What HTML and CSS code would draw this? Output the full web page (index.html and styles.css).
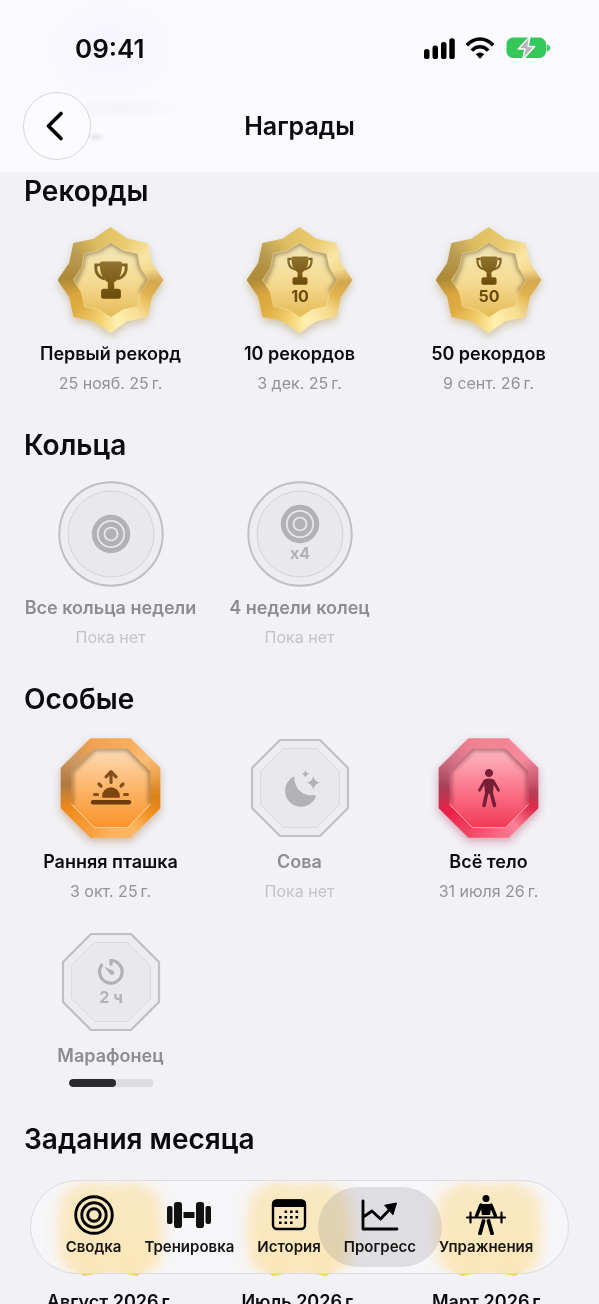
FILE: index.html
```html
<!DOCTYPE html>
<html lang="ru">
<head>
<meta charset="UTF-8">
<meta name="viewport" content="width=device-width, initial-scale=1.0">
<title>Награды</title>
<link rel="stylesheet" href="styles.css">
</head>
<body>
<svg class="sprite" aria-hidden="true">
  <defs>
    <linearGradient id="goldFace" x1="0" y1="0" x2="0" y2="1">
      <stop offset="0" stop-color="#f2e6bc"/>
      <stop offset="0.5" stop-color="#f5dc94"/>
      <stop offset="1" stop-color="#e5ba55"/>
    </linearGradient>
    <linearGradient id="orangeFace" x1="0" y1="0" x2="0" y2="1">
      <stop offset="0" stop-color="#fcdcb8"/>
      <stop offset="0.5" stop-color="#fdb569"/>
      <stop offset="1" stop-color="#fa932a"/>
    </linearGradient>
    <linearGradient id="redFace" x1="0" y1="0" x2="0" y2="1">
      <stop offset="0" stop-color="#fdb9c1"/>
      <stop offset="0.5" stop-color="#fb788d"/>
      <stop offset="1" stop-color="#f23a57"/>
    </linearGradient>
    <linearGradient id="goldInk" x1="0" y1="0" x2="0" y2="1">
      <stop offset="0" stop-color="#8f742c"/>
      <stop offset="1" stop-color="#6b4c08"/>
    </linearGradient>
    <filter id="soft" x="-20%" y="-20%" width="140%" height="140%">
      <feGaussianBlur stdDeviation="2.2"/>
    </filter>
    <path id="starShape" d="M0-37.5 12.2-29.6 26.5-26.5 29.6-12.2 37.5 0 29.6 12.2 26.5 26.5 12.2 29.6 0 37.5-12.2 29.6-26.5 26.5-29.6 12.2-37.5 0-29.6-12.2-26.5-26.5-12.2-29.6Z"/>
    <path id="octShape" d="M-16.5-39.5H16.5L39.5-16.5V16.5L16.5 39.5H-16.5L-39.5 16.5V-16.5Z"/>
    <clipPath id="starClip"><use href="#starShape"/></clipPath>
    <clipPath id="octClip"><use href="#octShape"/></clipPath>
  </defs>
  <symbol id="starFace" viewBox="-53 -53 106 106">
    <use href="#starShape" fill="url(#goldFace)"/>
    <g clip-path="url(#starClip)">
      <path d="M-37 5-29.6-12.2-26.5-26.5-12.2-29.6 0-37.5 12.2-29.6 26.5-26.5 29.6-12.2 37.5 0 30 13" fill="none" stroke="#5f4a1a" stroke-opacity=".6" stroke-width="4" filter="url(#soft)"/>
    </g>
    <use href="#starShape" fill="none" stroke="#fff0b8" stroke-opacity=".35"/>
  </symbol>
  <symbol id="orangeOct" viewBox="-53 -53 106 106">
    <use href="#octShape" fill="url(#orangeFace)"/>
    <g clip-path="url(#octClip)">
      <path d="M-39.5 16.5V-16.5L-16.5-39.5H16.5L39.5-16.5V16.5" fill="none" stroke="#6e4a22" stroke-opacity=".65" stroke-width="4" filter="url(#soft)"/>
    </g>
    <path d="M39.5 16.5 16.5 39.5H-16.5L-39.5 16.5" fill="none" stroke="#ffd39a"/>
  </symbol>
  <symbol id="redOct" viewBox="-53 -53 106 106">
    <use href="#octShape" fill="url(#redFace)"/>
    <g clip-path="url(#octClip)">
      <path d="M-39.5 16.5V-16.5L-16.5-39.5H16.5L39.5-16.5V16.5" fill="none" stroke="#6e2233" stroke-opacity=".65" stroke-width="4" filter="url(#soft)"/>
    </g>
    <path d="M39.5 16.5 16.5 39.5H-16.5L-39.5 16.5" fill="none" stroke="#ffa3a3"/>
  </symbol>
  <symbol id="lockedCircle" viewBox="-53 -53 106 106">
    <circle r="51.7" fill="#ededf1" stroke="#bfbfc4" stroke-width="2"/>
    <circle r="43" fill="#e9e9ed" stroke="#d3d3d8"/>
  </symbol>
  <symbol id="lockedOct" viewBox="-53 -53 106 106">
    <path d="M-20-48H20L48-20V20L20 48H-20L-48 20V-20Z" fill="#ededf1" stroke="#bfbfc4" stroke-width="2.2" stroke-linejoin="round"/>
    <path d="M-16.5-39.5H16.5L39.5-16.5V16.5L16.5 39.5H-16.5L-39.5 16.5V-16.5Z" fill="#e9e9ed" stroke="#d9d9de"/>
  </symbol>
  <symbol id="trophy" viewBox="-18 -19 36 38">
    <path d="M-11-15.2H-15.2C-15.8-7-12-2.5-6.5-1.2M11-15.2H15.2C15.8-7 12-2.5 6.5-1.2" fill="none" stroke="#7f6320" stroke-width="2.8"/>
    <path d="M-9.3-18.5H9.3Q11.3-18.5 11.2-16C11-8 9.5-1.5 3.2 2.2V8.7H7.2Q9.9 8.7 9.9 11.5V16.5Q9.9 18.7 7.7 18.7H-7.7Q-9.9 18.7-9.9 16.5V11.5Q-9.9 8.7-7.2 8.7H-3.2V2.2C-9.5-1.5-11-8-11.2-16Q-11.3-18.5-9.3-18.5Z" fill="url(#goldInk)"/>
  </symbol>
  <symbol id="target" viewBox="-20 -20 40 40">
    <circle r="19.2" fill="#b1b1b6"/>
    <circle r="13.2" fill="none" stroke="#e9e9ed" stroke-width="1.7"/>
    <circle r="6.5" fill="none" stroke="#e9e9ed" stroke-width="1.7"/>
  </symbol>
</svg>

<div class="screen">
  <header class="topbar">
    <div class="status">
      <span class="clock">09:41</span>
      <svg class="status-icons" viewBox="0 0 128 24" aria-hidden="true">
        <rect x="1" y="13" width="5.5" height="10" rx="2.6"/>
        <rect x="9.5" y="9.5" width="5.5" height="13.5" rx="2.6"/>
        <rect x="18" y="6" width="5.5" height="17" rx="2.6"/>
        <rect x="26.3" y="2.2" width="5.5" height="20.8" rx="2.6"/>
        <g fill="none" stroke="#000" stroke-width="3.5">
          <path d="M43.8 9.2C51.5 .8 62.5 .8 70.2 9.2"/>
          <path d="M48.8 14.6C53.5 9.6 60.5 9.6 65.2 14.6"/>
        </g>
        <path d="M52.8 18.2Q57 14.6 61.2 18.2L57 22.7Z"/>
        <path d="M123.5 8.5Q127.5 9.2 127.5 12T123.5 15.5Z" fill="#48cf68"/>
        <rect x="83.5" y="1.5" width="39.5" height="20.5" rx="6.5" fill="#34c759"/>
        <path d="M107 .5 95.2 13H102L99.8 23.5 111.7 10.5H105Z" fill="#b3b3b9" stroke="#fafaff" stroke-width="1.5" stroke-linejoin="round"/>
      </svg>
    </div>
    <div class="navbar">
      <button class="back" type="button" aria-label="Назад">
        <svg viewBox="0 0 20 30" aria-hidden="true"><path d="M16 2.5 3.5 15 16 27.5" fill="none" stroke="#000" stroke-width="3.6" stroke-linecap="round" stroke-linejoin="round"/></svg>
      </button>
      <h1>Награды</h1>
    </div>
  </header>

  <main class="content">
    <section>
      <h2>Рекорды</h2>
      <ul class="awards">
        <li class="award">
          <div class="medal medal-star gold">
            <span class="rim"></span>
            <svg viewBox="-53 -53 106 106" aria-hidden="true">
              <use href="#starFace" x="-53" y="-53" width="106" height="106"/>
              <use href="#trophy" x="-18" y="-19" width="36" height="38"/>
            </svg>
          </div>
          <h3>Первый рекорд</h3>
          <p>25 нояб. 25&#8239;г.</p>
        </li>
        <li class="award">
          <div class="medal medal-star gold">
            <span class="rim"></span>
            <svg viewBox="-53 -53 106 106">
              <use href="#starFace" x="-53" y="-53" width="106" height="106"/>
              <use href="#trophy" x="-14" y="-24" width="28" height="29"/>
              <text class="medal-text" y="22">10</text>
            </svg>
          </div>
          <h3>10 рекордов</h3>
          <p>3 дек. 25&#8239;г.</p>
        </li>
        <li class="award">
          <div class="medal medal-star gold">
            <span class="rim"></span>
            <svg viewBox="-53 -53 106 106">
              <use href="#starFace" x="-53" y="-53" width="106" height="106"/>
              <use href="#trophy" x="-14" y="-24" width="28" height="29"/>
              <text class="medal-text" y="22">50</text>
            </svg>
          </div>
          <h3>50 рекордов</h3>
          <p>9 сент. 26&#8239;г.</p>
        </li>
      </ul>
    </section>

    <section>
      <h2>Кольца</h2>
      <ul class="awards">
        <li class="award locked">
          <div class="medal">
            <svg viewBox="-53 -53 106 106" aria-hidden="true">
              <use href="#lockedCircle" x="-53" y="-53" width="106" height="106"/>
              <use href="#target" x="-20" y="-20" width="40" height="40"/>
            </svg>
          </div>
          <h3>Все кольца недели</h3>
          <p>Пока нет</p>
        </li>
        <li class="award locked">
          <div class="medal">
            <svg viewBox="-53 -53 106 106">
              <use href="#lockedCircle" x="-53" y="-53" width="106" height="106"/>
              <use href="#target" x="-20" y="-30" width="40" height="40"/>
              <text class="medal-text" y="25">x4</text>
            </svg>
          </div>
          <h3>4 недели колец</h3>
          <p>Пока нет</p>
        </li>
      </ul>
    </section>

    <section>
      <h2>Особые</h2>
      <ul class="awards">
        <li class="award">
          <div class="medal medal-oct orange">
            <span class="rim"></span>
            <svg viewBox="-53 -53 106 106" aria-hidden="true">
              <use href="#orangeOct" x="-53" y="-53" width="106" height="106"/>
              <g fill="none" stroke="#84501a" stroke-width="3.2" stroke-linecap="round" stroke-linejoin="round">
                <path d="M0-5.5V-16M-5-11.2 0-16.3 5-11.2M-12-4-10-2M12-4 10-2M-16.5 6.5H-13.5M16.5 6.5H13.5"/>
                <path d="M-18 14.3H18" stroke="#6e3c06" stroke-width="4.4"/>
              </g>
              <path d="M-8.8 9.8V8A8.8 8.8 0 0 1 8.8 8V9.8Z" fill="#7d4510"/>
            </svg>
          </div>
          <h3>Ранняя пташка</h3>
          <p>3 окт. 25&#8239;г.</p>
        </li>
        <li class="award locked">
          <div class="medal">
            <svg viewBox="-53 -53 106 106" aria-hidden="true">
              <use href="#lockedOct" x="-53" y="-53" width="106" height="106"/>
              <g fill="#b1b1b6">
                <path d="M-5.5-11C-6.5-1.5 2 9.2 14 7C16 6.6 16 8.5 15.3 10A16 16 0 1 1-6.5-11.3Q-5.6-11.6-5.5-11Z"/>
                <path d="M5.5-18Q6.2-14.7 9.5-14 6.2-13.3 5.5-10 4.8-13.3 1.5-14 4.8-14.7 5.5-18Z"/>
                <path d="M13.3-12Q14.3-6.2 20-5.2 14.3-4.2 13.3 1.6 12.3-4.2 6.6-5.2 12.3-6.2 13.3-12Z"/>
              </g>
            </svg>
          </div>
          <h3>Сова</h3>
          <p>Пока нет</p>
        </li>
        <li class="award">
          <div class="medal medal-oct red">
            <span class="rim"></span>
            <svg viewBox="-53 -53 106 106" aria-hidden="true">
              <use href="#redOct" x="-53" y="-53" width="106" height="106"/>
              <g fill="#762036" stroke="#762036" stroke-linecap="round" stroke-linejoin="round">
                <circle cy="-15" r="3.6"/>
                <path d="M-4.5-7.5Q0-10 4.5-7.5L3.2 5H-3.2Z" stroke-width="1.5"/>
                <path d="M-4.2-7-9.5 2.2M4.2-7 9.5 2.2" fill="none" stroke-width="2.8"/>
                <path d="M-2 4-5 17.5M2 4 5.5 17.5" fill="none" stroke-width="3.6"/>
              </g>
            </svg>
          </div>
          <h3>Всё тело</h3>
          <p>31 июля 26&#8239;г.</p>
        </li>
        <li class="award locked">
          <div class="medal">
            <svg viewBox="-53 -53 106 106">
              <use href="#lockedOct" x="-53" y="-53" width="106" height="106"/>
              <path d="M0-16.5V-21.5A11.3 11.3 0 1 1-8.5-17.8" fill="none" stroke="#b1b1b6" stroke-width="3.2"/>
              <path d="M-5.5-14.5 2.5-10.5A2 2 0 0 1 0-7.5Z" fill="#b1b1b6" stroke="#b1b1b6" stroke-linejoin="round"/>
              <text class="medal-text" y="21">2 ч</text>
            </svg>
          </div>
          <h3>Марафонец</h3>
          <progress value="56" max="100" aria-label="Марафонец"></progress>
        </li>
      </ul>
    </section>

    <section>
      <h2>Задания месяца</h2>
      <ul class="awards">
        <li class="award">
          <div class="medal medal-month gold"><span class="rim"></span></div>
          <h3>Август 2026&#8239;г.</h3>
        </li>
        <li class="award">
          <div class="medal medal-month gold"><span class="rim"></span></div>
          <h3>Июль 2026&#8239;г.</h3>
        </li>
        <li class="award">
          <div class="medal medal-month gold"><span class="rim"></span></div>
          <h3>Март 2026&#8239;г.</h3>
        </li>
      </ul>
    </section>
  </main>

  <nav class="tabbar">
    <a class="tab" href="#">
      <svg viewBox="0 0 40 40" aria-hidden="true" fill="none" stroke="#000" stroke-width="2.9">
        <circle cx="20" cy="20" r="18.3"/><circle cx="20" cy="20" r="12.2"/><circle cx="20" cy="20" r="6.3"/>
      </svg>
      Сводка
    </a>
    <a class="tab" href="#">
      <svg class="wide" viewBox="0 0 44 40" aria-hidden="true" fill="#111">
        <rect x="0" y="11" width="5.5" height="18" rx="2"/><rect x="7" y="7" width="8" height="26" rx="2.8"/>
        <rect x="16.5" y="17" width="11" height="6"/>
        <rect x="29" y="7" width="8" height="26" rx="2.8"/><rect x="38.5" y="11" width="5.5" height="18" rx="2"/>
      </svg>
      Тренировка
    </a>
    <a class="tab" href="#">
      <svg viewBox="0 0 40 40" aria-hidden="true">
        <rect x="4" y="5.5" width="32" height="28.5" rx="4" fill="none" stroke="#000" stroke-width="2.4"/>
        <path d="M3 12V9Q3 4.500 7.500 4.500H32.500Q37 4.500 37 9V12Z"/>
        <path d="M15.500 16.700H32M10 22.200H32M10 27.700H26" fill="none" stroke="#000" stroke-width="2.600" stroke-dasharray="2.600 2.900"/>
      </svg>
      История
    </a>
    <a class="tab active" href="#" aria-current="page">
      <svg viewBox="0 0 40 40" aria-hidden="true" fill="none" stroke="#000" stroke-width="2.8" stroke-linecap="round" stroke-linejoin="round">
        <path d="M3 6V34H37"/>
        <path d="M4 21.5 12 16 20.5 24 30.5 13.5"/>
        <path d="M25 10.2 36.5 8 33 19.5Z" fill="#000" stroke-width="1"/>
      </svg>
      Прогресс
    </a>
    <a class="tab" href="#">
      <svg viewBox="0 0 40 40" aria-hidden="true" stroke="#000" stroke-linecap="round" stroke-linejoin="round">
        <circle cx="20" cy="3.5" r="3.5" stroke="none"/>
        <path d="M15.5 10H24.5L23.2 19H16.8Z" stroke-width="2"/>
        <path d="M15 10 10.500 21M25 10 29.500 21" fill="none" stroke-width="3.400"/>
        <path d="M1 22.500H39M4.500 17.500V27.500M35.500 17.500V27.500" fill="none" stroke-width="2.200"/>
        <path d="M17.500 26 14 38.500M22.500 26 26 38.500" fill="none" stroke-width="3.800"/>
      </svg>
      Упражнения
    </a>
  </nav>
</div>
</body>
</html>
```
FILE: styles.css
```css
* {
  box-sizing: border-box;
}
body {
  margin: 0;
  background: #f1f1f6;
  color: #0b0b0d;
  font-family: Inter, "Liberation Sans", sans-serif;
}
h1, h2, h3, p, ul {
  margin: 0;
  padding: 0;
}
.sprite {
  position: absolute;
  width: 0;
  height: 0;
}
.screen {
  display: flex;
  flex-direction: column;
  height: 100vh;
  overflow: hidden;
}

/* header */
.topbar {
  flex: none;
  padding: 24px 23px 12px;
  background:
    radial-gradient(ellipse 10px 5px at 96px 137px, #e4e4ea, transparent),
    radial-gradient(ellipse 80px 12px at 120px 108px, #f4f4f9, transparent),
    radial-gradient(ellipse 90px 70px at 110px 50px, #f5f5fc, transparent),
    #fafaff;
}
.status {
  display: flex;
  justify-content: space-between;
  align-items: center;
  height: 48px;
  padding: 0 25px 0 52px;
}
.clock {
  font-size: 26px;
  font-weight: 600;
}
.status-icons {
  width: 128px;
  height: 24px;
}
.navbar {
  display: grid;
  grid-template-columns: 68px 1fr 68px;
  align-items: center;
  margin-top: 20px;
}
.navbar h1 {
  font-size: 25px;
  font-weight: 600;
  text-align: center;
}
.back {
  display: flex;
  align-items: center;
  justify-content: center;
  width: 68px;
  height: 68px;
  padding: 0 4px 0 0;
  border: 1px solid #d6d6db;
  border-radius: 50%;
  background: #fcfcff;
}
.back svg {
  width: 20px;
  height: 30px;
}

/* awards */
.content {
  flex: 1;
  min-height: 0;
  padding: 1px 24px 0;
  overflow-y: auto;
  scrollbar-width: none;
}
.content section {
  margin-bottom: 34px;
}
.content h2 {
  font-size: 28px;
  line-height: 36px;
  font-weight: 600;
}
.awards {
  display: grid;
  grid-template-columns: repeat(3, 1fr);
  gap: 28px 16px;
  margin-top: 18px;
  list-style: none;
}
.award {
  display: flex;
  flex-direction: column;
  align-items: center;
  text-align: center;
  white-space: nowrap;
}
.award h3 {
  margin-top: 10px;
  font-size: 18px;
  line-height: 22px;
  font-weight: 600;
}
.award p {
  margin-top: 8px;
  font-size: 16px;
  line-height: 20px;
  color: #929297;
}
.locked h3 {
  color: #8c8c91;
}
.locked p {
  color: #c3c3c8;
}
.award progress {
  appearance: none;
  width: 84px;
  height: 8px;
  margin-top: 12px;
  border: none;
  border-radius: 4px;
  background: #dcdce1;
  overflow: hidden;
}
.award progress::-webkit-progress-bar {
  background: #dcdce1;
}
.award progress::-webkit-progress-value {
  border-radius: 4px;
  background: #2b2b2d;
}

/* medals */
.medal {
  display: grid;
  width: 106px;
  height: 106px;
}
.medal > * {
  grid-area: 1 / 1;
  width: 100%;
  height: 100%;
}
.medal svg {
  z-index: 1;
}
.medal-text {
  fill: #b1b1b6;
  font-size: 16px;
  font-weight: 700;
  text-anchor: middle;
}
.gold .medal-text {
  fill: #6b4c08;
}
.gold {
  filter: drop-shadow(0 4px 4px rgba(150, 115, 30, 0.35));
}
.orange {
  filter: drop-shadow(0 4px 4px rgba(150, 85, 20, 0.35));
}
.red {
  filter: drop-shadow(0 4px 4px rgba(160, 30, 60, 0.35));
}
.gold .rim {
  background: conic-gradient(#e4c465, #eacc72 25deg, #fae6a5 55deg, #f3da8e 75deg, #d3a850 92deg, #e2b24e 112deg, #f7dd92 140deg, #fff0b2 172deg, #f3d06f 195deg, #deac42 230deg, #dba63e 248deg, #ad8a38 272deg, #b89a50 305deg, #dabb60 335deg, #e4c465);
}
.orange .rim {
  background: conic-gradient(#f9a752, #f9ae5e 25deg, #fbbd76 50deg, #eda04a 75deg, #d97f18 100deg, #ef8c1c 120deg, #ffb65e 150deg, #fdb15a 180deg, #f79a35 215deg, #ee8a1a 245deg, #b07a42 275deg, #cc9860 305deg, #f0a050 335deg, #f9a752);
}
.red .rim {
  background: conic-gradient(#f28494, #f58495 25deg, #f58a9c 50deg, #d4607a 75deg, #b93a55 98deg, #e02a4c 115deg, #ff8096 145deg, #f9627c 175deg, #f04060 210deg, #ea1f45 240deg, #a84058 272deg, #cf7084 305deg, #ef8090 335deg, #f28494);
}
.medal-star .rim {
  clip-path: polygon(50% 0, 66% 11%, 85% 15%, 89% 34%, 100% 50%, 89% 66%, 85% 85%, 66% 89%, 50% 100%, 34% 89%, 15% 85%, 11% 66%, 0 50%, 11% 34%, 15% 15%, 34% 11%);
}
.medal-oct .rim {
  clip-path: polygon(31% 3%, 69% 3%, 97% 31%, 97% 69%, 69% 97%, 31% 97%, 3% 69%, 3% 31%);
}
.medal-month {
  filter: none;
}
.medal-month .rim {
  background: linear-gradient(#f0d080, #f4cf78 50%, #f6c964);
  clip-path: polygon(25% 8%, 50% 10%, 75% 8%, 96% 18%, 100% 50%, 96% 84%, 75% 95%, 50% 91%, 25% 95%, 4% 84%, 0 50%, 4% 18%);
}

/* bottom tabs float above the list */
.tabbar {
  position: fixed;
  left: 30px;
  right: 30px;
  bottom: 30px;
  display: flex;
  justify-content: center;
  align-items: center;
  gap: 23px;
  height: 94px;
  border: 1px solid #dcdce0;
  border-radius: 47px;
  background: rgba(250, 249, 248, 0.6);
  backdrop-filter: blur(7px) saturate(1.2);
}
.tab {
  display: flex;
  flex-direction: column;
  align-items: center;
  gap: 2px;
  padding: 8px 0 10px;
  font-size: 15px;
  line-height: 20px;
  font-weight: 600;
  color: #161412;
  text-decoration: none;
}
.tab svg {
  width: 40px;
  height: 40px;
}
.tab svg.wide {
  width: 44px;
}
.tab.active {
  margin: 0 -26px;
  padding: 8px 26px 10px;
  border-radius: 40px;
  background: rgba(120, 120, 130, 0.2);
}
```
